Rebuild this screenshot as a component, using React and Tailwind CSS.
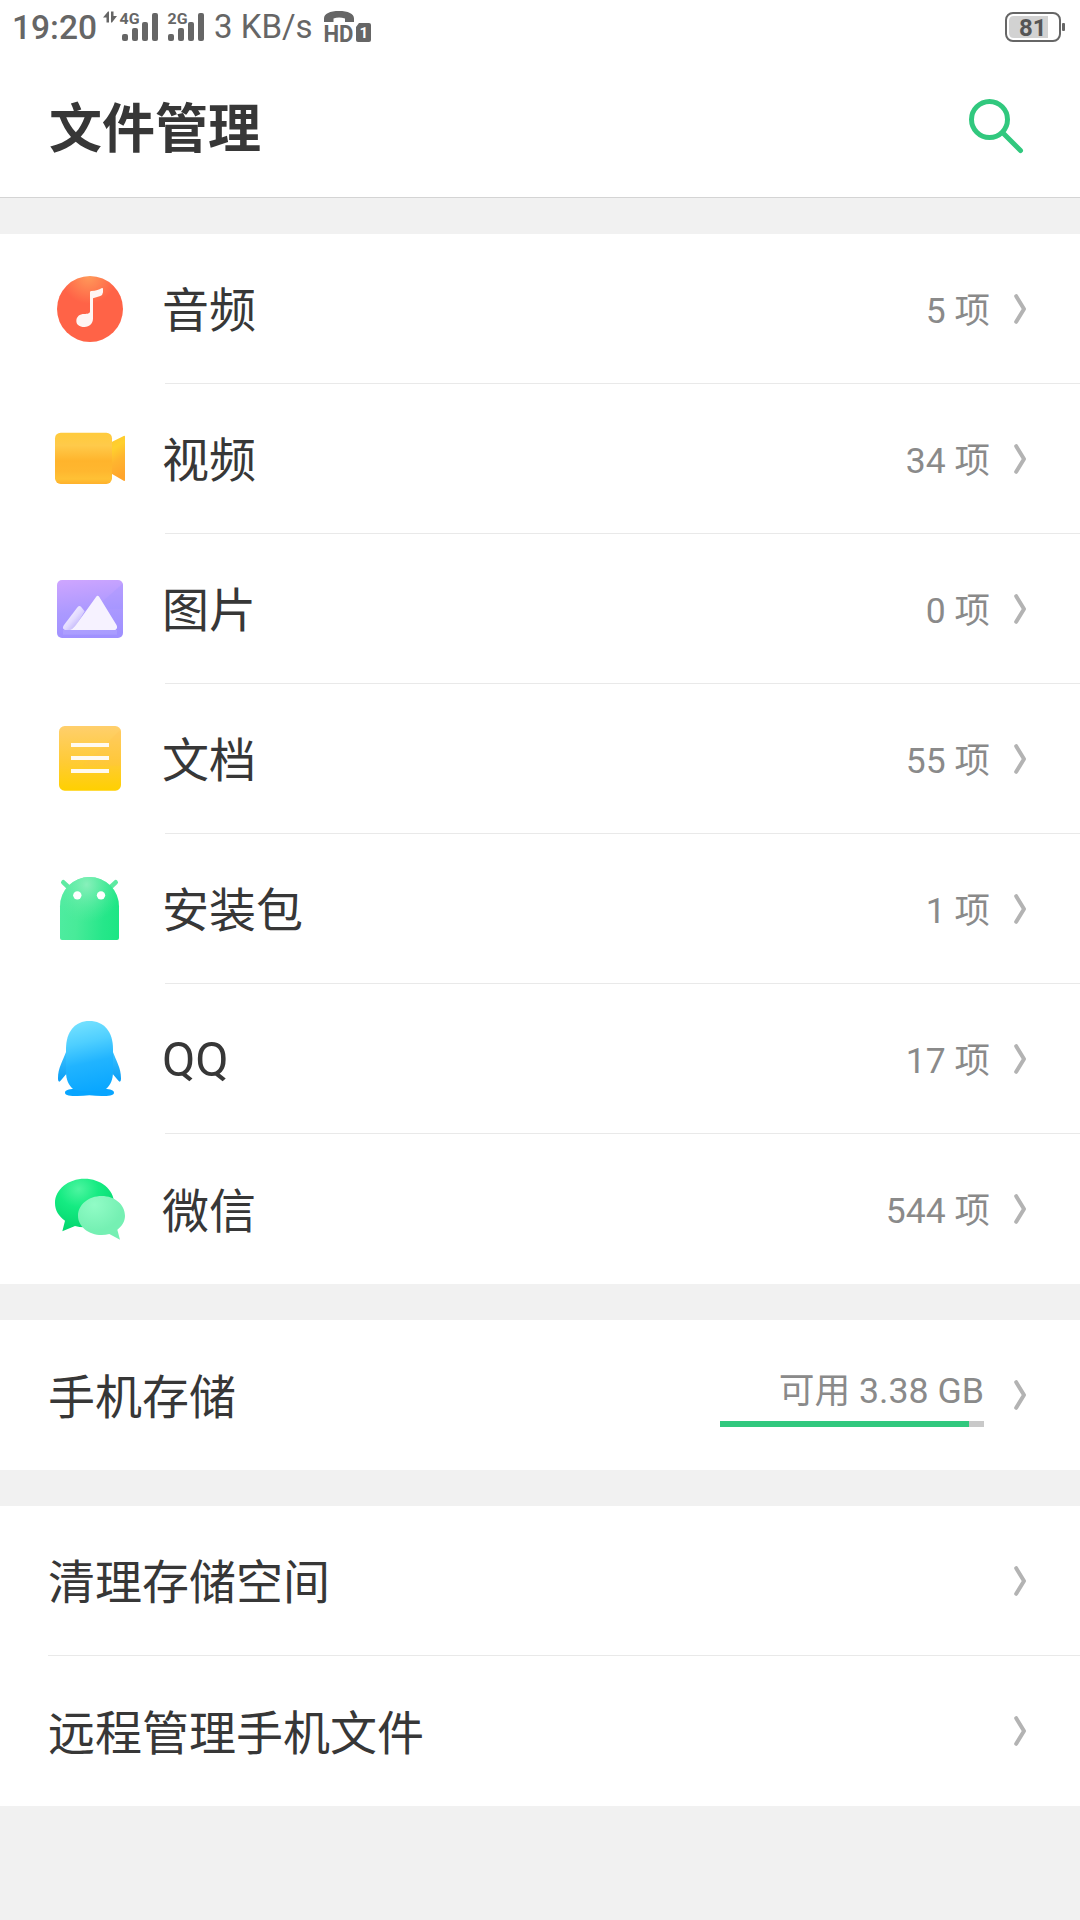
import React from "react";

const categories = [
  { name: "音频", count: 5, icon: AudioIcon },
  { name: "视频", count: 34, icon: VideoIcon },
  { name: "图片", count: 0, icon: PictureIcon },
  { name: "文档", count: 55, icon: DocumentIcon },
  { name: "安装包", count: 1, icon: PackageIcon },
  { name: "QQ", count: 17, icon: QQIcon },
  { name: "微信", count: 544, icon: WechatIcon },
];

const tools = ["清理存储空间", "远程管理手机文件"];

export default function App() {
  return (
    <div className="flex h-[1920px] w-[1080px] flex-col gap-9 overflow-hidden bg-[#f1f1f1] font-[Roboto,'Noto_Sans_CJK_SC',sans-serif] text-[#373737]">
      <div className="h-[198px] border-b border-[#d4d4d4] bg-white">
        <StatusBar />
        <Header />
      </div>

      <div className="bg-white">
        {categories.map((item, index) => (
          <CategoryRow
            key={item.name}
            item={item}
            last={index === categories.length - 1}
          />
        ))}
      </div>

      <StorageRow used={94.3} />

      <div className="bg-white pl-12">
        {tools.map((name, index) => (
          <div
            key={name}
            className={`flex h-[150px] items-center justify-between pr-[52px] ${
              index === 0 ? "border-b border-[#e9e9e9]" : ""
            }`}
          >
            <span className="pt-[5px] text-[47px] leading-[70px]">{name}</span>
            <Chevron />
          </div>
        ))}
      </div>
    </div>
  );
}

function StatusBar() {
  return (
    <div className="flex h-[54px] items-center justify-between pr-[14px] pl-3 text-[#666]">
      <div className="flex items-center">
        <span className="w-[91px] pt-[2px] text-[33.5px] leading-[54px] font-medium">
          19:20
        </span>
        <SignalIcon label="4G" arrows />
        <SignalIcon label="2G" />
        <span className="ml-[8px] w-[110px] text-[33px] leading-[54px] whitespace-nowrap">
          3 KB/s
        </span>
        <HdIcon />
      </div>
      <BatteryIcon level={81} />
    </div>
  );
}

function Header() {
  return (
    <div className="flex h-[143px] items-center justify-between pr-[54px] pl-[49px]">
      <h1 className="pt-[8px] text-[53px] leading-[80px] font-bold">文件管理</h1>
      <svg className="mt-[1px] h-15 w-15" viewBox="0 0 60 60" fill="none">
        <g stroke="#31c87e" strokeWidth="5" strokeLinecap="round">
          <circle cx="23.5" cy="23.5" r="18" />
          <path d="M37 37 54.5 54.5" />
        </g>
      </svg>
    </div>
  );
}

function CategoryRow({ item, last }) {
  const Icon = item.icon;
  return (
    <div className="flex h-[150px] items-center pl-[50px]">
      <Icon />
      <div
        className={`ml-[35px] flex h-full flex-1 items-center justify-between pr-[52px] ${
          last ? "" : "border-b border-[#e9e9e9]"
        }`}
      >
        <span
          className={`-ml-[3px] leading-[70px] ${
            item.name === "QQ" ? "pt-[3px] text-[48.5px]" : "pt-[5px] text-[47px]"
          }`}
        >
          {item.name}
        </span>
        <div className="flex items-center gap-[22px]">
          <span className="pt-[4px] text-[35.5px] leading-[54px] text-[#8a8a8a]">
            {item.count} 项
          </span>
          <Chevron />
        </div>
      </div>
    </div>
  );
}

function StorageRow({ used }) {
  return (
    <div className="flex h-[150px] items-center justify-between bg-white pr-[52px] pl-12">
      <span className="pt-[5px] text-[47px] leading-[70px]">手机存储</span>
      <div className="flex items-center gap-[28px]">
        <div className="flex w-[264px] flex-col items-end">
          <span className="pb-[3px] text-[35.7px] leading-[54px] text-[#8a8a8a]">
            可用 3.38 GB
          </span>
          <div className="h-[6px] w-full bg-[#c9c9c9]">
            <div className="h-full bg-[#31c87e]" style={{ width: `${used}%` }} />
          </div>
        </div>
        <Chevron />
      </div>
    </div>
  );
}

function Chevron() {
  return (
    <svg className="h-8 w-4" viewBox="0 0 16 32" fill="none">
      <path
        d="M4.2 3.2 12 16 4.2 28.8"
        stroke="#b3b3b3"
        strokeWidth="4"
        strokeLinecap="round"
        strokeLinejoin="round"
      />
    </svg>
  );
}

function SignalIcon({ label, arrows }) {
  return (
    <svg
      className={arrows ? "h-[54px] w-[57px]" : "h-[54px] w-[46px]"}
      viewBox={arrows ? "0 0 57 54" : "11 0 46 54"}
      fill="#666"
    >
      {arrows && (
        <path d="M0 17.5 5 11.5H6V22.5H3.5V17.5ZM8 11.5H10.5V16H14L9 22.5H8Z" />
      )}
      <text
        x={arrows ? 16.5 : 18.5}
        y="23.5"
        fontSize="14"
        fontWeight="700"
        textLength="20"
        lengthAdjust="spacingAndGlyphs"
      >
        {label}
      </text>
      <rect x="19" y="34" width="6" height="7" rx="2" />
      <rect x="29" y="28" width="6" height="13" rx="2" />
      <rect x="39" y="22" width="6" height="19" rx="2" />
      <rect x="49" y="13" width="6" height="28" rx="2" />
    </svg>
  );
}

function HdIcon() {
  return (
    <svg className="h-[54px] w-12" viewBox="0 0 48 54" fill="#666">
      <path d="M0 22V18.5C0 13.5 6 11 15 11S30 13.5 30 18.5V22H21V18.5C17 17 13 17 9.5 18.5V22Z" />
      <text
        x="-0.5"
        y="42"
        fontSize="23.5"
        fontWeight="700"
        textLength="30"
        lengthAdjust="spacingAndGlyphs"
      >
        HD
      </text>
      <path d="M35 23H45Q47 23 47 25V40Q47 42 45 42H34Q32 42 32 40V27Z" />
      <text x="35.5" y="38" fontSize="15" fontWeight="700" fill="#fff">
        1
      </text>
    </svg>
  );
}

function BatteryIcon({ level }) {
  return (
    <svg className="h-[54px] w-[61px]" viewBox="0 0 61 54" fill="none">
      <rect x="1" y="13" width="54" height="28" rx="7" stroke="#666" strokeWidth="2" />
      <path d="M43 16V38H9Q4 38 4 33V21Q4 16 9 16Z" fill="#d2d2d2" />
      <rect x="57" y="23" width="3" height="8" rx="1" fill="#666" />
      <text x="14" y="36" fontSize="24" fontWeight="700" fill="#555">
        {level}
      </text>
    </svg>
  );
}

function AudioIcon() {
  return (
    <svg className="h-20 w-20" viewBox="0 0 240 240">
      <defs>
        <radialGradient id="audio" cx="0.48" cy="0" r="0.42">
          <stop offset="0" stopColor="#ff9a5a" />
          <stop offset="1" stopColor="#ff6347" />
        </radialGradient>
      </defs>
      <circle cx="120" cy="120" r="99" fill="url(#audio)" />
      <path
        d="M120 70Q120 66 124 66Q145 65 154 58Q159 55 159 60V70Q158 79 151 81L129 88V148C129 164 119 174 103 174C88 174 79 167 79 156C79 143 89 135 103 135C112 135 120 134 120 127Z"
        fill="#fff5f3"
      />
    </svg>
  );
}

function VideoIcon() {
  return (
    <svg className="h-20 w-20" viewBox="0 0 240 240">
      <defs>
        <linearGradient id="videoBody" x1="0" y1="0" x2="0" y2="1">
          <stop offset="0" stopColor="#ffcb3c" />
          <stop offset="0.25" stopColor="#ffca4a" />
          <stop offset="0.55" stopColor="#ffb42c" />
          <stop offset="0.75" stopColor="#ffb72f" />
          <stop offset="0.9" stopColor="#ffc135" />
          <stop offset="1" stopColor="#ffb12c" />
        </linearGradient>
        <linearGradient id="videoLens" x1="0" y1="0" x2="0.2" y2="1">
          <stop offset="0" stopColor="#ffc72e" />
          <stop offset="0.3" stopColor="#ffd02e" />
          <stop offset="0.6" stopColor="#ffb52f" />
          <stop offset="1" stopColor="#ffa52c" />
        </linearGradient>
      </defs>
      <path d="M185 69 221 51Q225 49 225 53V183Q225 187 221 185L185 164Z" fill="url(#videoLens)" />
      <rect x="15" y="41" width="171" height="154" rx="17" fill="url(#videoBody)" />
    </svg>
  );
}

function PictureIcon() {
  return (
    <svg className="h-20 w-20" viewBox="0 0 240 240">
      <defs>
        <linearGradient id="picture" x1="0.2" y1="0" x2="0.35" y2="1">
          <stop offset="0" stopColor="#cda5ff" />
          <stop offset="0.55" stopColor="#ab99ff" />
          <stop offset="1" stopColor="#a091ff" />
        </linearGradient>
        <linearGradient id="hill" x1="0.2" y1="0.3" x2="0.65" y2="0.75">
          <stop offset="0" stopColor="#f4efff" />
          <stop offset="0.6" stopColor="#e2daff" />
          <stop offset="1" stopColor="#cabffb" />
        </linearGradient>
      </defs>
      <rect x="21" y="33" width="198" height="174" rx="15" fill="url(#picture)" />
      <path d="M219 43V120L133 119Z" fill="#a394ff" opacity="0.35" />
      <rect x="39" y="183" width="162" height="14" fill="#fff" opacity="0.1" />
      <path d="M83 114Q88 108 93 113L104 127 70 183H48C39 183 36 176 42 168Z" fill="url(#hill)" />
      <path d="M138 84Q143 77 148 84L199 167C204 175 200 183 192 183H60Q69 180 75 172Z" fill="#f6f2ff" />
    </svg>
  );
}

function DocumentIcon() {
  return (
    <svg className="h-20 w-20" viewBox="0 0 240 240">
      <defs>
        <linearGradient id="document" x1="0" y1="0" x2="0" y2="1">
          <stop offset="0" stopColor="#ffcf6c" />
          <stop offset="0.55" stopColor="#ffcb36" />
          <stop offset="1" stopColor="#ffd000" />
        </linearGradient>
      </defs>
      <rect x="27" y="21" width="186" height="194" rx="17" fill="url(#document)" />
      <path d="M213 31V140H98Z" fill="#ffc04e" opacity="0.22" />
      <path d="M63 78H177M63 117H177M63 156H177" stroke="#fffaf0" strokeWidth="12" />
    </svg>
  );
}

function PackageIcon() {
  return (
    <svg className="h-20 w-20" viewBox="0 0 240 240">
      <defs>
        <linearGradient id="robot" x1="0" y1="0.5" x2="1" y2="0.6">
          <stop offset="0" stopColor="#4eeca0" />
          <stop offset="0.3" stopColor="#48eb99" />
          <stop offset="0.75" stopColor="#26e78a" />
          <stop offset="1" stopColor="#1de684" />
        </linearGradient>
        <radialGradient id="robotShine" cx="0.45" cy="0.12" r="0.6">
          <stop offset="0" stopColor="#88f0bb" />
          <stop offset="1" stopColor="#5ceba2" stopOpacity="0" />
        </radialGradient>
      </defs>
      <path d="M40 40 58 57M197 40 179 57" stroke="#5eeaa2" strokeWidth="14" strokeLinecap="round" />
      <path d="M30 112A88.5 88 0 0 1 207 112V207Q207 213 201 213H36Q30 213 30 207Z" fill="url(#robot)" />
      <path d="M30 112A88.5 88 0 0 1 207 112V207Q207 213 201 213H36Q30 213 30 207Z" fill="url(#robotShine)" />
      <circle cx="82" cy="79" r="12.5" fill="#fff" />
      <circle cx="153" cy="79" r="12.5" fill="#fff" />
    </svg>
  );
}

function QQIcon() {
  return (
    <svg className="h-20 w-20" viewBox="0 0 240 240">
      <defs>
        <linearGradient id="penguin" x1="0.35" y1="0" x2="0.5" y2="1">
          <stop offset="0" stopColor="#74e1ff" />
          <stop offset="0.3" stopColor="#4fcfff" />
          <stop offset="0.6" stopColor="#21b4ff" />
          <stop offset="1" stopColor="#0aa7ff" />
        </linearGradient>
        <linearGradient id="wing" x1="0" y1="0" x2="0" y2="1">
          <stop offset="0" stopColor="#3cc2ff" />
          <stop offset="1" stopColor="#0a9df5" />
        </linearGradient>
      </defs>
      <path d="M49 97C38 127 24 147 24 178C24 190 28 190 33 184L52 161ZM188 97C199 127 213 147 213 178C213 190 209 190 204 184L185 161Z" fill="url(#wing)" />
      <path d="M45 221C45 213 56 210 72 209H165C181 210 192 213 192 221C192 229 175 231 155 231Q137 231 118 229Q100 231 82 231C62 231 45 229 45 221Z" fill="#08a5ff" />
      <path d="M118 6C162 6 189 38 189 90V158C189 182 181 198 168 210C157 219 80 219 69 210C56 198 48 182 48 158V90C48 38 75 6 118 6Z" fill="url(#penguin)" />
    </svg>
  );
}

function WechatIcon() {
  return (
    <svg className="h-20 w-20" viewBox="0 0 240 240">
      <defs>
        <radialGradient id="bubbleBack" cx="0.4" cy="0.2" r="0.75">
          <stop offset="0" stopColor="#4df5a0" />
          <stop offset="0.45" stopColor="#15eb82" />
          <stop offset="1" stopColor="#05d870" />
        </radialGradient>
        <radialGradient id="bubbleFront" cx="0.35" cy="0.2" r="0.6">
          <stop offset="0" stopColor="#91fcc6" />
          <stop offset="1" stopColor="#75f0b3" />
        </radialGradient>
      </defs>
      <path d="M103.5 29C152 29 192 61 192 102C192 143 152 175 103.5 175Q88 175 75 171L37 187 45 155C26 142 15 124 15 102C15 61 55 29 103.5 29Z" fill="url(#bubbleBack)" />
      <path d="M155 81C194 81 225 107 225 140C225 157 216 171 202 182L210 212 178 195Q167 198 155 198C116 198 84 172 84 140C84 107 116 81 155 81Z" fill="url(#bubbleFront)" />
    </svg>
  );
}
